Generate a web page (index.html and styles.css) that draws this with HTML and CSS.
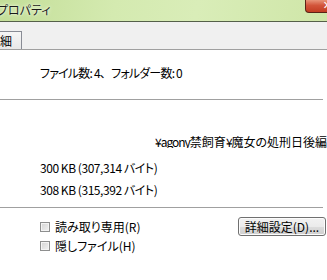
FILE: index.html
```html
<!DOCTYPE html>
<html lang="ja">
<head>
    <meta charset="UTF-8">
    <title>プロパティ</title>
    <link rel="stylesheet" href="styles.css">
</head>
<body>
    <div class="window">
        <div class="titlebar">
            <span class="title">プロパティ</span>
            <span class="close-btn"><span class="close-x">✕</span></span>
        </div>
        <div class="tabstrip">
            <div class="tab">細</div>
        </div>
        <div class="page">
            <div class="summary">ファイル数: 4<span class="full">、</span>フォルダー数: 0</div>
            <div class="separator"></div>
            <div class="location"><span class="narrow">¥agony</span>禁飼育<span class="narrow">¥</span>魔女の処刑日後編</div>
            <div class="size-row first">300 KB (307,314 バイト)</div>
            <div class="size-row">308 KB (315,392 バイト)</div>
            <div class="separator"></div>
            <div class="attributes">
                <div class="checks">
                    <label class="check"><span class="box"></span>読み取り専用(R)</label>
                    <label class="check"><span class="box"></span>隠しファイル(H)</label>
                </div>
                <button class="advanced" type="button">詳細設定(D)...</button>
            </div>
        </div>
    </div>
</body>
</html>
```

FILE: styles.css
```css
html, body {
    margin: 0;
    padding: 0;
}
body {
    width: 327px;
    height: 280px;
    overflow: hidden;
    font-family: "Noto Sans CJK JP", "Liberation Sans", sans-serif;
    font-size: 12px;
    font-feature-settings: "palt";
    color: #000;
    background: #fff;
}
.window {
    display: flex;
    flex-direction: column;
    height: 280px;
}
.titlebar {
    height: 21px;
    display: flex;
    align-items: flex-start;
    justify-content: space-between;
    background: linear-gradient(100deg, #c3de98 0%, #d4eab0 35%, #d9edb8 60%, #cfe6a8 100%);
    border-bottom: 1px solid #55604a;
    overflow: hidden;
}
.title {
    margin-left: -3px;
    margin-top: 2px;
    line-height: 15px;
    color: #1a1a1a;
    text-shadow: 0 0 4px #f4fbe8, 0 0 2px #f4fbe8;
}
.close-btn {
    width: 22px;
    height: 12px;
    margin-right: -2px;
    border: 1px solid #5a2216;
    border-top: none;
    border-bottom-left-radius: 4px;
    background: linear-gradient(#e89478 0%, #d2553a 45%, #c23d22 100%);
    overflow: hidden;
    display: flex;
    justify-content: flex-end;
}
.close-x {
    font-family: "DejaVu Sans", sans-serif;
    font-size: 11px;
    line-height: 11px;
    color: #fff;
    margin-right: -4px;
    font-weight: bold;
}
.tabstrip {
    height: 27px;
    background: #f0f0f0;
    display: flex;
    align-items: flex-end;
    border-bottom: 1px solid #a0a0a0;
}
.tab {
    height: 17px;
    padding: 0 9px 0 0;
    line-height: 17px;
    border: 1px solid #898c95;
    border-left: none;
    border-bottom: none;
    background: linear-gradient(#f6f6f6, #e8e8e8);
}
.page {
    flex: 1;
    background: #fff;
}
.summary {
    height: 49px;
    box-sizing: border-box;
    padding: 17px 0 0 40px;
    line-height: 12px;
    letter-spacing: -0.8px;
}
.full {
    font-feature-settings: normal;
}
.separator {
    width: 323px;
    height: 1px;
    background: #a0a0a0;
}
.location {
    margin-top: 36px;
    padding-left: 155px;
    line-height: 12px;
    white-space: nowrap;
    overflow: hidden;
}
.narrow {
    letter-spacing: -1px;
}
.size-row {
    margin-top: 10px;
    padding-left: 40px;
    line-height: 12px;
    letter-spacing: -0.45px;
}
.size-row.first {
    margin-top: 14px;
}
.size-row + .separator {
    margin-top: 11px;
}
.attributes {
    display: flex;
    justify-content: space-between;
    align-items: flex-start;
    padding: 9px 1px 0 40px;
}
.checks {
    display: flex;
    flex-direction: column;
    gap: 7px;
    padding-top: 4px;
}
.check {
    display: flex;
    align-items: center;
    gap: 5px;
    line-height: 12px;
}
.box {
    width: 8px;
    height: 8px;
    border: 1px solid #8e8f8f;
    background: linear-gradient(135deg, #d4d4d4, #f2f2f2);
    box-shadow: inset 0 0 0 1px #f4f4f4;
}
.advanced {
    width: 88px;
    height: 19px;
    padding: 0;
    font-family: inherit;
    font-size: 12px;
    font-feature-settings: "palt";
    line-height: 17px;
    color: #000;
    border: 1px solid #707070;
    border-radius: 3px;
    background: linear-gradient(#f2f2f2 0%, #ebebeb 50%, #dddddd 51%, #cfcfcf 100%);
    box-shadow: inset 0 0 0 1px #fcfcfc;
}
```
